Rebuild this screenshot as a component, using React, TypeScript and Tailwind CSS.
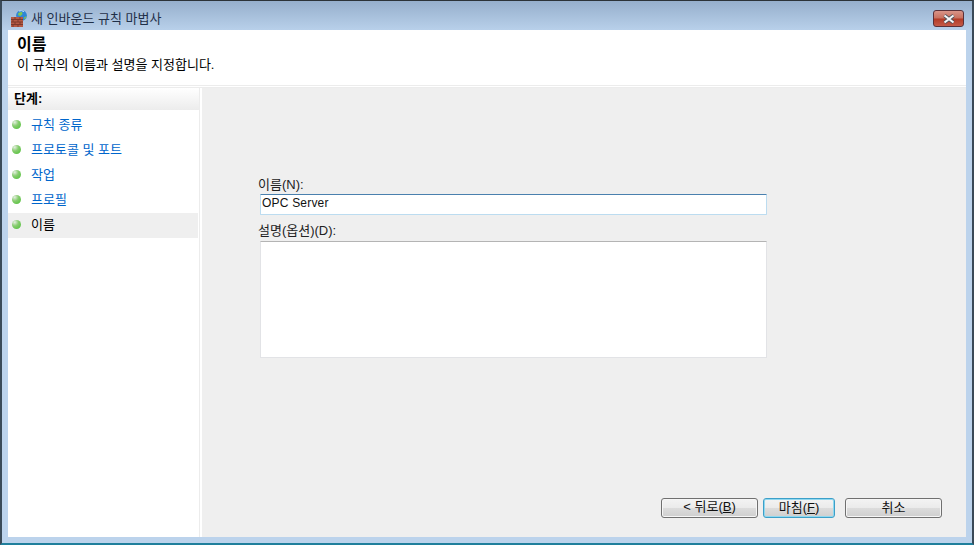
const FONT = "font-['Liberation_Sans','Noto_Sans_CJK_KR',sans-serif]";

const steps = [
  { label: '규칙 종류' },
  { label: '프로토콜 및 포트' },
  { label: '작업' },
  { label: '프로필' },
  { label: '이름', active: true },
];

function FirewallIcon() {
  return (
    <svg width="16" height="17" viewBox="0 0 16 17" className="shrink-0">
      <circle cx="10.5" cy="5.5" r="5.4" fill="#2f86d6" />
      <path d="M7 3.5 Q8.5 1.5 11 2 L11.5 4 L9.5 6 L7.5 5.5 Z" fill="#7cc850" />
      <path d="M13 7.5 L15.5 6 Q15 8.5 13.5 9.5 Z" fill="#7cc850" />
      <path d="M8 1 Q10.5 0 13 1.5" stroke="#cfe8f6" strokeWidth="1" fill="none" />
      <rect x="0" y="7" width="12" height="10" fill="#b65a44" />
      <path d="M0 9.5 H12 M0 12 H12 M0 14.5 H12 M4 7 V9.5 M9 7 V9.5 M2 9.5 V12 M7 9.5 V12 M4 12 V14.5 M9 12 V14.5 M2 14.5 V17 M7 14.5 V17" stroke="#7e3a2c" strokeWidth="1" fill="none" />
    </svg>
  );
}

function Bullet() {
  return (
    <span className="block h-[9px] w-[9px] shrink-0 rounded-full bg-[radial-gradient(circle_at_30%_25%,#e4eee0_0%,#88cc70_40%,#48c030_100%)]" />
  );
}

function StepRow({ label, active }: { label: string; active?: boolean }) {
  return (
    <div className={`flex h-[25px] items-center pb-[2px] pl-1 ${active ? 'bg-[#efefef] text-black' : 'text-[#0066cc]'}`}>
      <Bullet />
      <span className="ml-[10px] text-[13px]">{label}</span>
    </div>
  );
}

function WizardButton({ children, primary, width }: { children: React.ReactNode; primary?: boolean; width: string }) {
  return (
    <button
      type="button"
      className={`h-[20px] ${width} rounded-[3px] border pb-[2px] text-[13px] leading-none text-[#111] bg-[linear-gradient(#f3f3f3_0%,#ebebeb_48%,#dcdcdc_52%,#cfcfcf_100%)] ${
        primary ? 'border-[#3c9fc8] shadow-[inset_0_0_0_1px_#8fd8f0]' : 'border-[#707070] shadow-[inset_0_0_0_1px_#f6f6f6]'
      }`}
    >
      {children}
    </button>
  );
}

export default function App() {
  return (
    <div className={`${FONT} h-[545px] w-[974px] overflow-hidden bg-[#bcd3ec] text-black`}>
      <div className="flex h-full flex-col border-x-2 border-t border-b-2 border-x-[#3a4a58] border-t-[#2c3338] border-b-[#1f7f9c]">
        {/* title bar */}
        <div className="flex h-[29px] shrink-0 items-center bg-[linear-gradient(#96afcc,#b8d0ea)] pl-[9px] pr-[8px] pt-[6px]">
          <FirewallIcon />
          <span className="ml-[4px] text-[13px] text-[#1f2f48]">새 인바운드 규칙 마법사</span>
          <div className="ml-auto flex h-[17px] w-[31px] items-center justify-center rounded-[3px] border border-[#5a3038] bg-[linear-gradient(#d99488_0%,#c8705f_48%,#b23a26_52%,#c45a48_100%)]">
            <svg width="14" height="10" viewBox="0 0 14 10">
              <path d="M2.5 1.5 L11.5 8.5 M11.5 1.5 L2.5 8.5" stroke="#4a4f58" strokeWidth="3.6" />
              <path d="M2.5 1.5 L11.5 8.5 M11.5 1.5 L2.5 8.5" stroke="#f4f6f8" strokeWidth="2.2" />
            </svg>
          </div>
        </div>

        {/* client area */}
        <div className="mx-[6px] mb-[6px] flex min-h-0 flex-1 flex-col bg-white">
          <div className="h-[55px] shrink-0 pl-[9px] pt-[5px]">
            <h1 className="text-[16px] font-bold leading-[20px]">이름</h1>
            <p className="mt-[3px] text-[13px] leading-[14px]">이 규칙의 이름과 설명을 지정합니다.</p>
          </div>
          <div className="h-[3px] shrink-0 border-y border-y-[#ececec] bg-white" />

          <div className="flex min-h-0 flex-1">
            {/* steps */}
            <div className="w-[194px] shrink-0">
              <div className="h-full w-[192px] border-r border-r-[#ececec]">
                <div className="flex h-[22px] items-center bg-[linear-gradient(#ffffff,#ececec)] pl-[6px] text-[13px] font-bold">
                  단계:
                </div>
                <div className="w-[190px] pt-[3px]">
                  {steps.map((s) => (
                    <StepRow key={s.label} label={s.label} active={s.active} />
                  ))}
                </div>
              </div>
            </div>

            {/* form */}
            <div className="flex min-w-0 flex-1 flex-col bg-[#efefef] pl-[58px] pr-[24px] pb-[19px] pt-[88px] text-[13px]">
              <label className="-ml-[2px] block h-[18px] leading-[18px] text-[#222]">이름(N):</label>
              <input
                readOnly
                value="OPC Server"
                className="h-[21px] w-[507px] rounded-[1px] border border-[#bcdcf0] border-t-[#4a80ae] bg-white px-[1px] pb-[3px] text-[12px] tracking-[0.2px] text-[#111] outline-none"
              />
              <label className="-ml-[2px] mt-[6px] block h-[20px] leading-[20px] text-[#222]">설명(옵션)(D):</label>
              <div className="h-[117px] w-[507px] border border-[#e2e3e6] border-t-[#b4b4b4] bg-white" />

              <div className="mt-auto flex justify-end">
                <WizardButton width="w-[97px]">
                  {'< 뒤로('}
                  <u>B</u>)
                </WizardButton>
                <div className="ml-[5px]">
                  <WizardButton primary width="w-[72px]">
                    마침(<u>F</u>)
                  </WizardButton>
                </div>
                <div className="ml-[10px]">
                  <WizardButton width="w-[97px]">취소</WizardButton>
                </div>
              </div>
            </div>
          </div>
        </div>
      </div>
    </div>
  );
}
